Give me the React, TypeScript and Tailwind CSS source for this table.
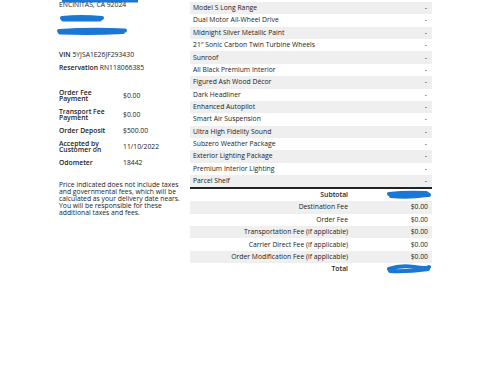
import React from "react";

const items = [
    "Model S Long Range",
    "Dual Motor All-Wheel Drive",
    "Midnight Silver Metallic Paint",
    "21\u2033 Sonic Carbon Twin Turbine Wheels",
    "Sunroof",
    "All Black Premium Interior",
    "Figured Ash Wood Décor",
    "Dark Headliner",
    "Enhanced Autopilot",
    "Smart Air Suspension",
    "Ultra High Fidelity Sound",
    "Subzero Weather Package",
    "Exterior Lighting Package",
    "Premium Interior Lighting",
    "Parcel Shelf",
];

const fees = [
    { label: "Destination Fee", value: "$0.00" },
    { label: "Order Fee", value: "$0.00" },
    { label: "Transportation Fee (if applicable)", value: "$0.00" },
    { label: "Carrier Direct Fee (if applicable)", value: "$0.00" },
    { label: "Order Modification Fee (if applicable)", value: "$0.00" },
];

const details = [
    { label: "Order Fee Payment", value: "$0.00" },
    { label: "Transport Fee Payment", value: "$0.00" },
    { label: "Order Deposit", value: "$500.00" },
    { label: "Accepted by Customer on", value: "11/10/2022" },
    { label: "Odometer", value: "18442" },
];

// blue marker strokes hiding personal info
function Scribble({ w, h, d }: { w: number; h: number; d: string }) {
    return (
        <svg width={w} height={h} viewBox={`0 0 ${w} ${h}`} className="block shrink-0">
            <path d={d} fill="none" stroke="#1a78d4" strokeWidth={4} strokeLinecap="round" strokeLinejoin="round" />
        </svg>
    );
}

export default function App() {
    return (
        <div className="w-[488px] h-[366px] bg-white text-[#222] overflow-hidden flex pl-[59px] font-['Open_Sans',sans-serif] text-[6.8px]">
            <div className="w-[124px] flex flex-col">
                <div className="relative h-[10px]">
                    <svg width="80" height="4" className="absolute top-0 left-[1px]">
                        <path d="M2 1 L78 1" fill="none" stroke="#1a78d4" strokeWidth={3} />
                    </svg>
                    <p className="pt-[1px] leading-[8px]">ENCINITAS, CA 92024</p>
                </div>
                <div className="mt-[4px] h-[9px]">
                    <Scribble w={46} h={9} d="M3 4 Q22 2 43 4 M4 5.5 L41 5.5" />
                </div>
                <div className="mt-[4px] h-[9px] ml-[-3px]">
                    <Scribble w={72} h={9} d="M3 4 Q36 2 69 3.5 M4 5.5 Q36 6.5 67 5" />
                </div>
                <div className="mt-[15px] flex flex-col gap-[5px] leading-[8px]">
                    <p><span className="font-semibold">VIN</span> 5YJSA1E26JF293430</p>
                    <p><span className="font-semibold">Reservation</span> RN118066385</p>
                </div>
                <div className="mt-[18px] flex flex-col gap-[6.5px]">
                    {details.map((d) => (
                        <div key={d.label} className="flex items-center leading-[6.3px]">
                            <span className="w-[64px] pr-[10px] font-semibold">{d.label}</span>
                            <span>{d.value}</span>
                        </div>
                    ))}
                </div>
                <p className="mt-[15px] leading-[7px] pr-[2px]">
                    Price indicated does not include taxes and governmental fees, which will be calculated as your delivery date nears. You will be responsible for these additional taxes and fees.
                </p>
            </div>
            <div className="w-[242px] ml-[7px] pt-[2px] flex flex-col">
                {items.map((item, i) => (
                    <div key={item} className={`h-[12.36px] flex items-center justify-between px-[3px] ${i % 2 === 0 ? "bg-[#efefef]" : "bg-white"}`}>
                        <span>{item}</span>
                        <span className="pr-[2px]">-</span>
                    </div>
                ))}
                <div className="h-[2px] bg-[#222]"></div>
                <div className="h-[12px] flex items-center">
                    <span className="w-[158px] text-right font-semibold">Subtotal</span>
                    <div className="ml-auto">
                        <Scribble w={46} h={10} d="M3 4 Q20 2 40 3 L43 5 M5 6 Q22 8 41 5" />
                    </div>
                </div>
                {fees.map((f, i) => (
                    <div key={f.label} className={`h-[12.36px] flex items-center ${i % 2 === 0 ? "bg-[#efefef]" : "bg-white"}`}>
                        <span className="w-[158px] text-right">{f.label}</span>
                        <span className="ml-auto pr-[4px]">{f.value}</span>
                    </div>
                ))}
                <div className="h-[12px] flex items-center">
                    <span className="w-[158px] text-right font-semibold">Total</span>
                    <div className="ml-auto">
                        <Scribble w={46} h={12} d="M3 6 Q14 2 28 4 T43 4 M4 8 Q20 9 42 6" />
                    </div>
                </div>
            </div>
        </div>
    );
}
